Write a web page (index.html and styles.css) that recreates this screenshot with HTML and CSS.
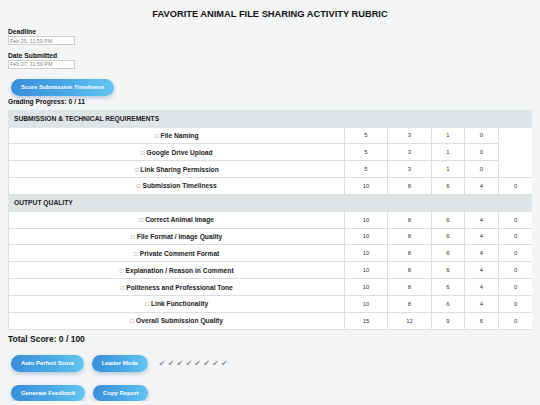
FILE: index.html
```html
<!DOCTYPE html>
<html>
<head>
<meta charset="utf-8">
<link rel="stylesheet" href="styles.css">
</head>
<body>
<h1 class="title">FAVORITE ANIMAL FILE SHARING ACTIVITY RUBRIC</h1>
<div class="field field-first">
  <label class="label">Deadline</label>
  <input class="date" type="text" value="Feb 25, 11:59 PM">
</div>
<div class="field">
  <label class="label">Date Submitted</label>
  <input class="date" type="text" value="Feb 27, 11:59 PM">
</div>
<div class="timeliness"><button class="btn">Score Submission Timeliness</button></div>
<div class="progress">Grading Progress: 0 / 11</div>
<table class="rubric">
  <colgroup>
    <col class="c-name"><col class="c-a"><col class="c-b"><col class="c-c"><col class="c-d"><col class="c-e">
  </colgroup>
  <tr class="section"><td colspan="6">SUBMISSION &amp; TECHNICAL REQUIREMENTS</td></tr>
  <tr><td class="name"><span class="box">☐</span> File Naming</td><td>5</td><td>3</td><td>1</td><td>0</td></tr>
  <tr><td class="name"><span class="box">☐</span> Google Drive Upload</td><td>5</td><td>3</td><td>1</td><td>0</td></tr>
  <tr><td class="name"><span class="box">☐</span> Link Sharing Permission</td><td>5</td><td>3</td><td>1</td><td>0</td></tr>
  <tr><td class="name"><span class="box">☐</span> Submission Timeliness</td><td>10</td><td>8</td><td>6</td><td>4</td><td>0</td></tr>
  <tr class="section"><td colspan="6">OUTPUT QUALITY</td></tr>
  <tr><td class="name"><span class="box">☐</span> Correct Animal Image</td><td>10</td><td>8</td><td>6</td><td>4</td><td>0</td></tr>
  <tr><td class="name"><span class="box">☐</span> File Format / Image Quality</td><td>10</td><td>8</td><td>6</td><td>4</td><td>0</td></tr>
  <tr><td class="name"><span class="box">☐</span> Private Comment Format</td><td>10</td><td>8</td><td>6</td><td>4</td><td>0</td></tr>
  <tr><td class="name"><span class="box">☐</span> Explanation / Reason in Comment</td><td>10</td><td>8</td><td>6</td><td>4</td><td>0</td></tr>
  <tr><td class="name"><span class="box">☐</span> Politeness and Professional Tone</td><td>10</td><td>8</td><td>6</td><td>4</td><td>0</td></tr>
  <tr><td class="name"><span class="box">☐</span> Link Functionality</td><td>10</td><td>8</td><td>6</td><td>4</td><td>0</td></tr>
  <tr><td class="name"><span class="box">☐</span> Overall Submission Quality</td><td>15</td><td>12</td><td>9</td><td>6</td><td>0</td></tr>
</table>
<div class="total">Total Score: 0 / 100</div>
<div class="actions actions-first">
  <button class="btn">Auto Perfect Score</button>
  <button class="btn">Leader Mode</button>
  <span class="checks">✔✔✔✔✔✔✔✔</span>
</div>
<div class="actions">
  <button class="btn">Generate Feedback</button>
  <button class="btn">Copy Report</button>
</div>
</body>
</html>
```
FILE: styles.css
```css
html, body {
  background: #f4f5f7;
}
body {
  margin: 8px;
  font-family: "Liberation Sans", Arial, sans-serif;
  color: #1a1a1a;
}
.title {
  margin: 1px 0 0;
  font-size: 9.3px;
  line-height: 11px;
  font-weight: bold;
  text-align: center;
  color: #111;
}
.field {
  display: flex;
  flex-direction: column;
  align-items: flex-start;
  margin-top: 6.7px;
}
.field-first {
  margin-top: 8px;
}
.label {
  font-size: 6.7px;
  line-height: 8px;
  font-weight: bold;
  color: #111;
}
.date {
  box-sizing: border-box;
  width: 67px;
  height: 9px;
  margin: 0;
  padding: 0 1px;
  border: 1px solid #cfcfcf;
  background: #fff;
  font-family: "Liberation Sans", Arial, sans-serif;
  font-size: 5.4px;
  color: #888;
  outline: none;
}
.timeliness {
  margin-top: 10.3px;
  display: flex;
}
.btn {
  box-sizing: border-box;
  height: 16.7px;
  margin: 0 0 0 3px;
  padding: 0 10px;
  border: none;
  border-radius: 9px;
  background: linear-gradient(90deg, #3a8edb 0%, #4aa9e6 55%, #63c6f1 100%);
  box-shadow: 0 2px 4px rgba(40, 90, 140, 0.3);
  color: #fff;
  font-family: "Liberation Sans", Arial, sans-serif;
  font-size: 5.9px;
  font-weight: bold;
  cursor: pointer;
}
.progress {
  margin-top: 2.2px;
  font-size: 6.7px;
  line-height: 8px;
  font-weight: bold;
  color: #111;
}
.rubric {
  margin-top: 3.8px;
  width: 100%;
  table-layout: fixed;
  border-collapse: collapse;
  background: #fff;
}
.c-name { width: 336px; }
.c-a { width: 43px; }
.c-b { width: 44px; }
.c-c { width: 33px; }
.c-d { width: 34px; }
.c-e { width: 34px; }
.rubric tr {
  height: 16.85px;
}
.rubric td {
  padding: 0;
  border: 1px solid #dedede;
  text-align: center;
  font-size: 5.9px;
  color: #333;
}
.rubric td.name {
  font-size: 6.7px;
  font-weight: bold;
  color: #222;
}
.box {
  font-family: "DejaVu Sans", sans-serif;
  font-weight: normal;
  font-size: 4.8px;
  color: #777;
}
.rubric .section td {
  background: #dfe4e7;
  border-color: #dfe4e7;
  text-align: left;
  padding-left: 5px;
  font-size: 6.7px;
  font-weight: bold;
  color: #1a1a1a;
}
.total {
  margin-top: 4.5px;
  font-size: 8.5px;
  line-height: 10px;
  font-weight: bold;
  color: #111;
}
.actions {
  display: flex;
  align-items: center;
  gap: 4.7px;
  margin-top: 13px;
}
.actions-first {
  margin-top: 10.8px;
}
.checks {
  margin-left: 6px;
  font-family: "DejaVu Sans", sans-serif;
  font-size: 8px;
  letter-spacing: 2.2px;
  color: #8c8c8c;
}
```
